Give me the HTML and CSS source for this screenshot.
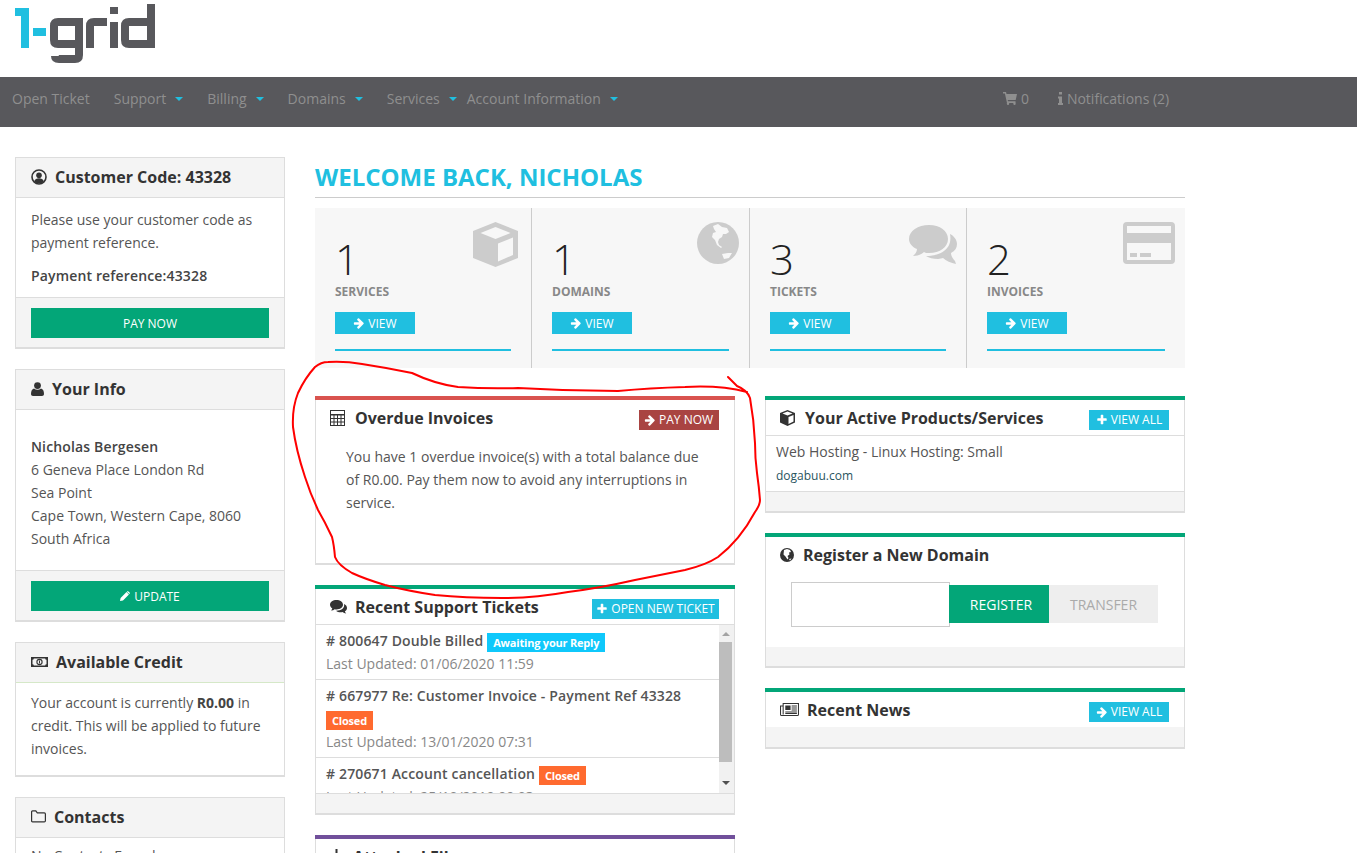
FILE: index.html
```html
<!DOCTYPE html>
<html lang="en">
<head>
<meta charset="utf-8">
<title>1-grid Client Area</title>
<link rel="stylesheet" href="styles.css">
</head>
<body>
<svg class="defs" width="0" height="0" aria-hidden="true">
  <symbol id="i-arrow" viewBox="0 0 1792 1792"><path fill="currentColor" d="M1600 960q0 54-37 91l-651 651q-39 37-91 37-51 0-90-37l-75-75q-38-38-38-91t38-91l293-293H245q-52 0-84.500-37.500T128 1024V896q0-53 32.500-90.500T245 768h704L656 474q-38-36-38-90t38-90l75-75q38-38 90-38 53 0 91 38l651 651q37 35 37 90z"/></symbol>
  <symbol id="i-plus" viewBox="0 0 1792 1792"><path fill="currentColor" d="M1600 736v192q0 40-28 68t-68 28h-416v416q0 40-28 68t-68 28H800q-40 0-68-28t-28-68v-416H288q-40 0-68-28t-28-68V736q0-40 28-68t68-28h416V224q0-40 28-68t68-28h192q40 0 68 28t28 68v416h416q40 0 68 28t28 68z"/></symbol>
</svg>

<header class="brand">
  <svg class="logo" width="160" height="70" viewBox="0 0 160 70" role="img" aria-label="1-grid">
    <path class="logo-blue" d="M15 8h14v40h-8V16h-6z"/>
    <rect class="logo-blue" x="33" y="28" width="13" height="8"/>
    <g class="logo-stroke">
      <path d="M79 44H58q-4 0-4-4V26q0-4 4-4h21v33q0 4-4 4H59q-4 0-4-3"/>
      <path d="M90 48V26q0-4 4-4h13"/>
      <path d="M114 22v26"/>
      <path d="M114 7v7"/>
      <path d="M151 4v40h-22q-4 0-4-4V26q0-4 4-4h22"/>
    </g>
  </svg>
</header>

<nav class="topnav">
  <a class="nav-item">Open Ticket</a>
  <a class="nav-item">Support<i class="caret"></i></a>
  <a class="nav-item">Billing<i class="caret"></i></a>
  <a class="nav-item">Domains<i class="caret"></i></a>
  <a class="nav-item tight">Services<i class="caret"></i></a>
  <a class="nav-item">Account Information<i class="caret"></i></a>
  <div class="nav-right">
    <a class="nav-icon-link">
      <svg class="nav-icon" width="14" height="13" viewBox="0 0 14 13"><path fill="currentColor" d="M0 0h3l.5 2H14l-1.300 6H4.700l.3 1.300h7.500V11H4L1.900 1.500H0z"/><circle fill="currentColor" cx="5" cy="11.800" r="1.200"/><circle fill="currentColor" cx="11.500" cy="11.800" r="1.200"/></svg>
      0
    </a>
    <a class="nav-icon-link">
      <svg class="nav-icon" width="5" height="13" viewBox="0 0 5 13"><path fill="currentColor" d="M1 0h3v2.500H1zM0 4.500h4v6.500h1v2H0v-2h1V6.500H0z"/></svg>
      Notifications (2)
    </a>
  </div>
</nav>

<div class="page">
  <aside class="sidebar">
    <section class="side-panel">
      <div class="side-head">
        <svg class="head-icon" width="16" height="16" viewBox="0 0 16 16"><circle cx="8" cy="8" r="7" fill="none" stroke="currentColor" stroke-width="1.600"/><circle cx="8" cy="6.200" r="2.800" fill="currentColor"/><path fill="currentColor" d="M3 12.500c1-2.500 2.700-3.200 5-3.200s4 .7 5 3.200c-1.300 1.300-3 2-5 2s-3.700-.7-5-2z"/></svg>
        <h3>Customer Code: 43328</h3>
      </div>
      <div class="side-body">
        <p>Please use your customer code as payment reference.</p>
        <p class="strong-line">Payment reference:43328</p>
      </div>
      <div class="side-foot"><a class="btn-green">PAY NOW</a></div>
    </section>

    <section class="side-panel">
      <div class="side-head">
        <svg class="head-icon" width="13" height="14" viewBox="0 0 13 14"><circle cx="6.500" cy="3.600" r="3.400" fill="currentColor"/><path fill="currentColor" d="M0 12c0-3 1-5 3-5.500 1 .8 2.200 1.200 3.500 1.200S9 7.300 10 6.500c2 .5 3 2.500 3 5.500 0 1.300-.8 2-2 2H2c-1.200 0-2-.7-2-2z"/></svg>
        <h3>Your Info</h3>
      </div>
      <div class="side-body info-body">
        <p class="strong-line">Nicholas Bergesen</p>
        <p>6 Geneva Place London Rd<br>Sea Point<br>Cape Town, Western Cape, 8060<br>South Africa</p>
      </div>
      <div class="side-foot">
        <a class="btn-green">
          <svg class="btn-icon" width="10" height="10" viewBox="0 0 10 10"><path fill="currentColor" d="M0 10l.6-3L6.500 1.100l2.400 2.400L3 9.400zM7.200.4q.6-.6 1.200 0l1.200 1.200q.6.600 0 1.200l-.3.300-2.400-2.400z"/></svg>
          UPDATE
        </a>
      </div>
    </section>

    <section class="side-panel">
      <div class="side-head credit-head">
        <svg class="head-icon" width="17" height="12" viewBox="0 0 17 12"><path fill="currentColor" fill-rule="evenodd" d="M0 1h17v10H0zM2.800 2.500q0 1.200-1.300 1.300v4.400q1.300.1 1.300 1.300h11.400q0-1.200 1.300-1.300V3.800q-1.300-.1-1.300-1.300z"/><circle cx="8.500" cy="6" r="2.600" fill="none" stroke="currentColor" stroke-width="1.100"/><rect x="8" y="4.500" width="1" height="3" fill="currentColor"/></svg>
        <h3>Available Credit</h3>
      </div>
      <div class="side-body credit-body">
        <p>Your account is currently <strong>R0.00</strong> in credit. This will be applied to future invoices.</p>
      </div>
    </section>

    <section class="side-panel">
      <div class="side-head">
        <svg class="head-icon" width="15" height="13" viewBox="0 0 15 13"><path fill="none" stroke="currentColor" stroke-width="1.200" d="M1.600.9h3.200l1.500 1.900h7q1.100 0 1.100 1.100v6.800q0 1.100-1.100 1.100H1.600q-1 0-1-1.100V2q0-1.100 1-1.100z"/></svg>
        <h3>Contacts</h3>
      </div>
      <div class="side-body contacts-body"><p>No Contacts Found</p></div>
    </section>
  </aside>

  <main class="content">
    <h1 class="welcome">WELCOME BACK, NICHOLAS</h1>

    <div class="stats">
      <div class="stat">
        <svg class="stat-art" width="45" height="45" viewBox="0 0 45 45"><path fill="#ccc" d="M22.500 0L45 9v27L22.500 45 0 36V9z"/><path fill="#f7f7f7" d="M22.500 5l15 6-15 6-15-6zM25 21.500l15-6v17.500L25 39.500z"/></svg>
        <div class="stat-num">1</div>
        <div class="stat-label">SERVICES</div>
        <a class="btn-view"><svg class="btn-icon" width="12" height="12"><use href="#i-arrow"/></svg>VIEW</a>
      </div>
      <div class="stat">
        <svg class="stat-art art-globe" width="42" height="42" viewBox="0 0 42 42"><circle cx="21" cy="21" r="21" fill="#ccc"/><path fill="#f7f7f7" d="M16 4l5-2 4 3 5 1 2 4-3 2-3 0-1 3-3 2-1 3 1 3 3 2-1 1-4-3-2-5-3-3 1-4 3-1-2-3zM25 32l6-1 4 0-3 5-5 1z"/></svg>
        <div class="stat-num">1</div>
        <div class="stat-label">DOMAINS</div>
        <a class="btn-view"><svg class="btn-icon" width="12" height="12"><use href="#i-arrow"/></svg>VIEW</a>
      </div>
      <div class="stat">
        <svg class="stat-art art-chat" width="48" height="39" viewBox="0 0 48 39"><path fill="#ccc" d="M20 0c11 0 19 6 19 14s-8 14-19 14c-2 0-4 0-5-1-2 2-6 4-11 4 2-2 4-4 4-7C3 22 0 18 0 14 0 6 9 0 20 0z"/><path fill="#ccc" d="M41 9c4 2 7 6 7 10 0 4-2 7-6 9 0 3 2 6 4 8l1 3c-5-1-10-3-13-6-1 0-3 1-5 1-5 0-9-1-12-3 13 0 27-6 24-22z"/></svg>
        <div class="stat-num">3</div>
        <div class="stat-label">TICKETS</div>
        <a class="btn-view"><svg class="btn-icon" width="12" height="12"><use href="#i-arrow"/></svg>VIEW</a>
      </div>
      <div class="stat">
        <svg class="stat-art art-card" width="52" height="42" viewBox="0 0 52 42"><rect x="2" y="2" width="48" height="38" rx="2" fill="none" stroke="#ccc" stroke-width="4"/><rect x="2" y="11" width="48" height="10" fill="#ccc"/><rect x="7" y="31" width="7" height="4" fill="#ccc"/><rect x="17" y="31" width="11" height="4" fill="#ccc"/></svg>
        <div class="stat-num">2</div>
        <div class="stat-label">INVOICES</div>
        <a class="btn-view"><svg class="btn-icon" width="12" height="12"><use href="#i-arrow"/></svg>VIEW</a>
      </div>
    </div>

    <div class="columns">
      <div class="col">
        <section class="panel panel-red overdue">
          <div class="panel-head">
            <svg class="head-icon" width="15" height="16" viewBox="0 0 15 16"><path fill="currentColor" fill-rule="evenodd" d="M0 0h15v16H0zM1 1v3h13V1zM1 5.500V8h2.500V5.500zm3.500 0V8h2.500V5.500zm3.500 0V8h2.500V5.500zm3.500 0V8H14V5.500zM1 9v2.500h2.500V9zm3.500 0v2.500h2.500V9zM8 9v2.500h2.500V9zm3.500 0v2.500H14V9zM1 12.500V15h2.500v-2.500zm3.500 0V15h2.500v-2.500zm3.500 0V15h2.500v-2.500zm3.500 0V15H14v-2.500z"/></svg>
            <h3>Overdue Invoices</h3>
            <a class="btn-small btn-danger"><svg class="btn-icon" width="12" height="12"><use href="#i-arrow"/></svg>PAY NOW</a>
          </div>
          <p class="overdue-text">You have 1 overdue invoice(s) with a total balance due of R0.00. Pay them now to avoid any interruptions in service.</p>
        </section>

        <section class="panel panel-green tickets">
          <div class="panel-head ruled">
            <svg class="head-icon chat-icon" width="17" height="14" viewBox="0 0 17 14"><path fill="currentColor" d="M6.500 0C10 0 13 2 13 4.700s-3 4.700-6.500 4.700c-.6 0-1.200 0-1.800-.2C3.800 9.900 2.600 10.400 1 10.600c.6-.7 1.100-1.400 1.300-2.300C.9 7.500 0 6.200 0 4.700 0 2 3 0 6.500 0z"/><path fill="currentColor" d="M14 4c1.800.8 3 2.200 3 3.900 0 1.400-.8 2.600-2.100 3.400.2.900.7 1.600 1.300 2.200-1.600-.2-2.800-.7-3.700-1.400-.6.100-1.200.2-1.800.2-1.900 0-3.500-.6-4.700-1.600 4.400.2 9.200-2.400 8-6.700z"/></svg>
            <h3>Recent Support Tickets</h3>
            <a class="btn-small btn-info btn-wide"><svg class="btn-icon" width="12" height="12"><use href="#i-plus"/></svg>OPEN NEW TICKET</a>
          </div>
          <div class="ticket-scroll">
            <ul class="ticket-list">
              <li>
                <div class="ticket-title"># 800647 Double Billed <span class="badge badge-wait">Awaiting your Reply</span></div>
                <div class="ticket-date">Last Updated: 01/06/2020 11:59</div>
              </li>
              <li>
                <div class="ticket-title"># 667977 Re: Customer Invoice - Payment Ref 43328 <span class="badge badge-closed">Closed</span></div>
                <div class="ticket-date">Last Updated: 13/01/2020 07:31</div>
              </li>
              <li>
                <div class="ticket-title"># 270671 Account cancellation <span class="badge badge-closed">Closed</span></div>
                <div class="ticket-date">Last Updated: 25/10/2019 09:03</div>
              </li>
            </ul>
            <div class="scrollbar" aria-hidden="true">
              <i class="arrow-up"></i>
              <i class="thumb"></i>
              <i class="arrow-down"></i>
            </div>
          </div>
          <div class="panel-foot ruled-top"></div>
        </section>

        <section class="panel panel-purple files">
          <div class="panel-head">
            <svg class="head-icon" width="13" height="16" viewBox="0 0 13 16"><path fill="currentColor" d="M5.500 0h2v7h5.500v2H0V7h5.500z"/></svg>
            <h3>Attached Files</h3>
          </div>
        </section>
      </div>

      <div class="col">
        <section class="panel panel-green">
          <div class="panel-head ruled">
            <svg class="head-icon" width="15" height="16" viewBox="0 0 15 16"><path fill="currentColor" d="M7.500 0L15 3v9.500L7.500 16 0 12.500V3z"/><path fill="#fff" d="M7.500 1.500l5 2-5 2-5-2zM8.500 7l5-2v6.500l-5 2.500z"/></svg>
            <h3>Your Active Products/Services</h3>
            <a class="btn-small btn-info btn-std"><svg class="btn-icon" width="12" height="12"><use href="#i-plus"/></svg>VIEW ALL</a>
          </div>
          <div class="product">
            <div class="product-name">Web Hosting - Linux Hosting: Small</div>
            <div class="product-domain">dogabuu.com</div>
          </div>
          <div class="panel-foot ruled-top"></div>
        </section>

        <section class="panel panel-green">
          <div class="panel-head">
            <svg class="head-icon globe-icon" width="14" height="14" viewBox="0 0 14 14"><circle cx="7" cy="7" r="7" fill="currentColor"/><path fill="#fff" d="M4 2l3-1 3 1 1 2-2 .5.5 2-2 1.500 1 2-1 1.500-2-3-2-2zM9 11l2.500-.5-1.500 2z"/></svg>
            <h3>Register a New Domain</h3>
          </div>
          <form class="domain-form">
            <input class="domain-input" type="text" aria-label="Domain name">
            <button class="domain-btn register" type="button">REGISTER</button>
            <button class="domain-btn transfer" type="button">TRANSFER</button>
          </form>
          <div class="panel-foot foot-short"></div>
        </section>

        <section class="panel panel-green">
          <div class="panel-head">
            <svg class="head-icon news-icon" width="19" height="13" viewBox="0 0 18 13" preserveAspectRatio="none"><path fill="none" stroke="currentColor" stroke-width="1" d="M3 .5h14.500v11q0 1-1 1H1.500q-1 0-1-1V3H3zM3 3v8.500"/><path fill="currentColor" d="M5 2.500h5v4.500H5zM11 2.500h5v1h-5zM11 4.500h5v1h-5zM11 6.500h5v1h-5zM5 8.500h11v1H5zM5 10h11v1H5z"/></svg>
            <h3>Recent News</h3>
            <a class="btn-small btn-info btn-std"><svg class="btn-icon" width="12" height="12"><use href="#i-arrow"/></svg>VIEW ALL</a>
          </div>
          <div class="panel-foot"></div>
        </section>
      </div>
    </div>
  </main>
</div>

<svg class="scribble" width="1357" height="853" viewBox="0 0 1357 853" aria-hidden="true">
  <path d="M728 377L737 386Q747 390 750 398Q754 420 755 443Q755 458 757 473Q759 487 760 500Q760 505 755 512Q740 540 718 557Q706 565 685 570Q660 575 635 580Q600 588 568 592Q535 598 502 598Q465 598 435 595Q408 591 385 585Q365 579 352 573Q338 565 335 557Q334 545 332 537Q325 522 318 510Q310 493 305 477Q296 450 293 427Q292 408 298 393Q305 378 315 367Q321 362 328 362Q345 361 362 364Q388 368 412 373Q435 384 458 387Q488 389 518 388Q568 391 618 391Q650 388 685 387Q720 385 747 392"/>
</svg>
</body>
</html>
```

FILE: styles.css
```css
* { box-sizing: border-box; }
html, body { margin: 0; height: 853px; overflow: hidden; }
body {
  position: relative;
  font-family: "Open Sans", "Liberation Sans", sans-serif;
  font-size: 14px;
  line-height: 23px;
  color: #555;
  background: #fff;
}
.defs { position: absolute; }
h1, h3, p, ul { margin: 0; padding: 0; }
svg { display: block; flex: none; }

.brand { height: 77px; }
.logo { display: block; }
.logo-blue { fill: #20bfe0; }
.logo-stroke path { fill: none; stroke: #58585c; stroke-width: 8; }

.topnav {
  display: flex;
  align-items: center;
  height: 50px;
  padding: 0 0 8px 12px;
  background: #58585c;
  color: #8f8f8f;
}
.nav-item { display: flex; align-items: center; margin-right: 24px; }
.nav-item.tight { margin-right: 10px; }
.caret {
  width: 0; height: 0;
  margin: 2px 0 0 9px;
  border-left: 4.500px solid transparent;
  border-right: 4.500px solid transparent;
  border-top: 4px solid #20bfe0;
}
.nav-right { display: flex; align-items: center; margin-left: 361px; gap: 29px; }
.nav-icon-link { display: flex; align-items: center; gap: 4px; }

.page { display: flex; padding: 30px 0 0 15px; gap: 30px; }
.sidebar { width: 270px; flex: none; display: flex; flex-direction: column; gap: 20px; }
.side-panel { border: 1px solid #ddd; border-bottom-width: 2px; }
.side-head {
  display: flex;
  align-items: center;
  height: 40px;
  padding: 0 0 2px 15px;
  background: #f4f4f4;
  border-bottom: 1px solid #ddd;
  color: #333;
}
.side-head h3, .panel-head h3 { font-size: 16px; font-weight: 700; line-height: 22px; color: #333; }
.side-head .head-icon { margin-right: 8px; }
.side-body { padding: 10px 15px; }
.strong-line { font-weight: 600; letter-spacing: .15px; color: #444; margin-top: 10px; }
.info-body { padding-top: 25px; padding-bottom: 20px; }
.info-body .strong-line { margin-top: 0; }
.credit-head { border-bottom-color: #d5e8c8; }
.credit-body { padding: 8px 15px 15px; }
.credit-body strong { font-weight: 700; color: #444; }
.contacts-body { padding-top: 6px; }
.side-foot { padding: 10px 15px 9px; background: #f4f4f4; border-top: 1px solid #ddd; }
.btn-green {
  display: flex;
  align-items: center;
  justify-content: center;
  gap: 4px;
  height: 30px;
  background: #03a678;
  color: #fff;
  font-size: 12px;
}

.content { width: 870px; flex: none; }
.welcome {
  height: 41px;
  font-size: 24px;
  line-height: 40px;
  font-weight: 700;
  color: #20bfe0;
  border-bottom: 1px solid #ccc;
}
.stats {
  display: grid;
  grid-template-columns: 217px 218px 217px 218px;
  margin-top: 10px;
  height: 160px;
  background: #f7f7f7;
}
.stat {
  position: relative;
  padding: 25px 20px 0;
  border-right: 1px solid #ccc;
}
.stat:last-child { border-right: 0; }
.stat::after {
  content: "";
  position: absolute;
  left: 20px; right: 20px; top: 141px;
  height: 2px;
  background: #20bfe0;
}
.stat-art { position: absolute; right: 13px; top: 14px; }
.art-globe { right: 10px; }
.art-chat { right: 9px; top: 17px; }
.art-card { right: 10px; }
.stat-num { font-size: 42px; line-height: 52px; color: #222; font-weight: 300; }
.stat-label { margin-top: -1px; font-size: 12px; line-height: 16px; font-weight: 700; color: #888; }
.btn-view {
  display: flex;
  align-items: center;
  justify-content: center;
  gap: 3px;
  width: 80px;
  height: 22px;
  margin-top: 12px;
  background: #20bfe0;
  color: #fff;
  font-size: 12px;
}

.columns { display: flex; gap: 30px; margin-top: 28px; }
.col { width: 420px; display: flex; flex-direction: column; gap: 20px; }
.panel {
  border: 1px solid #ddd;
  border-top-width: 0;
  border-bottom-width: 2px;
  position: relative;
}
.panel::before { content: ""; display: block; height: 4px; margin: 0 -1px; }
.panel-red::before { background: #d9534f; }
.panel-green::before { background: #03a678; }
.panel-purple::before { background: #71509b; }
.panel-head {
  display: flex;
  align-items: center;
  height: 35px;
  padding: 0 15px 0 14px;
  color: #333;
}
.panel-head.ruled { height: 36px; border-bottom: 1px solid #ddd; }
.panel-head .head-icon { margin-right: 10px; }
.panel-head .chat-icon { margin-right: 8px; }
.panel-head .globe-icon { margin-right: 9px; }
.panel-head .news-icon { margin-right: 8px; }
.btn-small {
  display: flex;
  align-items: center;
  gap: 3px;
  height: 20px;
  margin: 4px 0 0 auto;
  padding: 0 5px;
  color: #fff;
  font-size: 12px;
  white-space: nowrap;
}
.btn-danger { width: 80px; background: #a94442; }
.btn-info { justify-content: center; background: #20bfe0; }
.btn-std { width: 80px; }
.btn-wide { width: 127px; }

.overdue { height: 169px; }
.overdue-text { padding: 10px 30px 0; }

.tickets { height: 230px; }
.ticket-scroll { display: flex; height: 168px; overflow: hidden; }
.ticket-list { flex: 1; list-style: none; height: 168px; overflow: hidden; }
.ticket-list li { padding: 4px 10px; border-bottom: 1px solid #ddd; }
.ticket-title { font-weight: 600; letter-spacing: .15px; color: #555; line-height: 23px; }
.ticket-date { color: #888; line-height: 23px; }
.badge {
  display: inline-block;
  padding: 0 6px;
  height: 19px;
  font-size: 11px;
  line-height: 19px;
  font-weight: 700;
  letter-spacing: -.2px;
  color: #fff;
  vertical-align: bottom;
}
.badge-wait { background: #0fc8fb; }
.badge-closed { background: #ff6a2f; }
.scrollbar {
  position: relative;
  display: flex;
  flex-direction: column;
  align-items: center;
  justify-content: flex-start;
  width: 15px;
  background: #f1f1f1;
}
.thumb { display: block; width: 13px; height: 120px; margin: 6px 2px 0 0; background: #bdbdbd; }
.arrow-up, .arrow-down {
  display: block; width: 0; height: 0;
  border-left: 4px solid transparent;
  border-right: 4px solid transparent;
  margin-right: 2px;
}
.arrow-up { border-bottom: 4px solid #a3a3a3; margin-top: 7px; }
.arrow-down { border-top: 4px solid #505050; margin-top: 19px; }
.panel-foot { height: 20px; background: #f4f4f4; }
.foot-short { height: 19px; }
.ruled-top { border-top: 1px solid #ddd; }

.product { padding: 4px 10px; height: 55px; }
.product-name { color: #555; line-height: 23px; }
.product-domain { margin-top: 1px; font-size: 12px; line-height: 24px; color: #2a5560; }

.domain-form { display: flex; align-items: flex-start; padding: 10px 25px 20px; height: 75px; }
.domain-input { width: 159px; height: 45px; border: 1px solid #ccc; background: #fff; padding: 0; }
.domain-btn {
  height: 38px;
  margin-top: 3px;
  border: 0;
  font-family: inherit;
  font-size: 14px;
  padding: 0;
}
.register { width: 100px; margin-left: -1px; padding-left: 4px; background: #03a678; color: #fff; }
.transfer { width: 109px; background: #eee; color: #aaa; }

.files { height: 60px; }

.scribble {
  position: absolute;
  left: 0; top: 0;
  pointer-events: none;
}
.scribble path { fill: none; stroke: #f00; stroke-width: 2; stroke-linecap: round; stroke-linejoin: round; }
```
